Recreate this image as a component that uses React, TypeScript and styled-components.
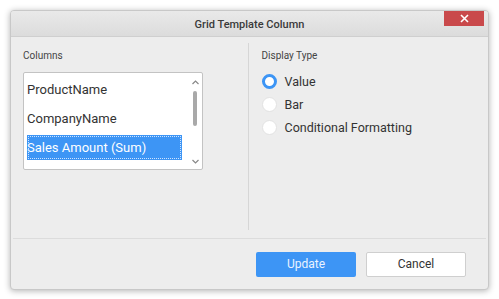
import { styled, createGlobalStyle } from 'styled-components';

const GlobalStyle = createGlobalStyle`
  html, body {
    margin: 0;
    padding: 0;
    background: #ffffff;
    font-family: Roboto, "Liberation Sans", sans-serif;
  }
`;

const columns = ['ProductName', 'CompanyName', 'Sales Amount (Sum)'];
const displayTypes = ['Value', 'Bar', 'Conditional Formatting'];

const App = () => {
  return (
    <>
      <GlobalStyle />
      <Page>
        <Dialog>
          <TitleBar>
            <Title>Grid Template Column</Title>
            <CloseButton aria-label="close">
              <svg width="9" height="9" viewBox="0 0 9 9">
                <path d="M1 1 L8 8 M8 1 L1 8" stroke="#fff" strokeWidth="1.6" />
              </svg>
            </CloseButton>
          </TitleBar>
          <Body>
            <Pane $inset={10}>
              <SectionLabel>Columns</SectionLabel>
              <ListBox>
                <ListItems>
                  {columns.map((c, i) => (
                    <ListItem key={c} $selected={i === 2}>
                      {c}
                    </ListItem>
                  ))}
                </ListItems>
                <ScrollTrack>
                  <Arrow>
                    <svg width="7" height="5" viewBox="0 0 7 5">
                      <path d="M0.5 4 L3.5 1 L6.5 4" stroke="#888" strokeWidth="1.2" fill="none" />
                    </svg>
                  </Arrow>
                  <Thumb />
                  <Spacer />
                  <Arrow>
                    <svg width="7" height="5" viewBox="0 0 7 5">
                      <path d="M0.5 1 L3.5 4 L6.5 1" stroke="#888" strokeWidth="1.2" fill="none" />
                    </svg>
                  </Arrow>
                </ScrollTrack>
              </ListBox>
            </Pane>
            <Divider />
            <Pane $inset={13}>
              <SectionLabel>Display Type</SectionLabel>
              <RadioList>
                {displayTypes.map((t, i) => (
                  <RadioRow key={t}>
                    <Radio $checked={i === 0} />
                    <RadioText>{t}</RadioText>
                  </RadioRow>
                ))}
              </RadioList>
            </Pane>
          </Body>
          <Footer>
            <PrimaryButton>Update</PrimaryButton>
            <SecondaryButton>Cancel</SecondaryButton>
          </Footer>
        </Dialog>
      </Page>
    </>
  );
};

export default App;

const Page = styled.div`
  width: 499px;
  height: 299px;
  padding: 10px;
  box-sizing: border-box;
`;

const Dialog = styled.div`
  width: 479px;
  height: 280px;
  box-sizing: border-box;
  background: #ededed;
  border: 1px solid #c8c8c8;
  border-radius: 4px;
  box-shadow: 0 1px 6px rgba(0, 0, 0, 0.3);
  display: flex;
  flex-direction: column;
  overflow: hidden;
`;

const TitleBar = styled.div`
  height: 25px;
  flex-shrink: 0;
  position: relative;
  display: flex;
  align-items: center;
  justify-content: center;
  background: linear-gradient(#e9e9e9, #dcdcdc);
  border-bottom: 1px solid #cfcfcf;
`;

const Title = styled.div`
  font-size: 11px;
  font-weight: 500;
  color: #3a3a3a;
  padding-top: 1px;
`;

const CloseButton = styled.div`
  position: absolute;
  top: -1px;
  right: 4px;
  width: 40px;
  height: 16px;
  background: #c9494b;
  display: flex;
  align-items: center;
  justify-content: center;
`;

const Body = styled.div`
  flex: 1;
  display: flex;
  padding-top: 6px;
  border-bottom: 1px solid #dcdcdc;
  margin: 0 2px;
`;

const Pane = styled.div<{ $inset: number }>`
  flex: 1;
  padding: 6px 11px 0 ${(p) => p.$inset}px;
`;

const Divider = styled.div`
  width: 1px;
  background: #d6d6d6;
  margin-bottom: 8px;
`;

const SectionLabel = styled.div`
  font-size: 10px;
  color: #444;
  height: 13px;
  line-height: 13px;
`;

const ListBox = styled.div`
  margin-top: 10px;
  width: 180px;
  height: 98px;
  box-sizing: border-box;
  background: #fff;
  border: 1px solid #c3c3c3;
  border-radius: 2px;
  display: flex;
  overflow: hidden;
`;

const ListItems = styled.div`
  flex: 1;
  padding: 4px 0 0 3px;
  display: flex;
  flex-direction: column;
  gap: 4px;
`;

const ListItem = styled.div<{ $selected?: boolean }>`
  height: 25px;
  line-height: 25px;
  font-size: 13px;
  width: 155px;
  box-sizing: border-box;
  flex-shrink: 0;
  color: ${(p) => (p.$selected ? '#ffffff' : '#333')};
  background: ${(p) => (p.$selected ? '#3d95f5' : 'transparent')};
  outline: ${(p) => (p.$selected ? '1px dotted #cfe4ff' : 'none')};
  outline-offset: -2px;
  white-space: nowrap;
`;

const ScrollTrack = styled.div`
  width: 14px;
  display: flex;
  flex-direction: column;
  align-items: center;
  padding: 6px 0 4px;
  box-sizing: border-box;
`;

const Arrow = styled.div`
  height: 7px;
  display: flex;
  align-items: center;
`;

const Thumb = styled.div`
  width: 4px;
  height: 35px;
  margin-top: 5px;
  border-radius: 2px;
  background: #a9a9a9;
`;

const Spacer = styled.div`
  flex: 1;
`;

const RadioList = styled.div`
  margin-top: 11px;
  display: flex;
  flex-direction: column;
  gap: 7px;
`;

const RadioRow = styled.div`
  display: flex;
  align-items: center;
  height: 16px;
`;

const Radio = styled.div<{ $checked?: boolean }>`
  width: 15px;
  height: 15px;
  box-sizing: border-box;
  border-radius: 50%;
  background: #fff;
  border: ${(p) => (p.$checked ? '3px solid #3d95f5' : '1px solid #e2e2e2')};
`;

const RadioText = styled.span`
  margin-left: 8px;
  font-size: 12.5px;
  color: #333;
`;

const Footer = styled.div`
  height: 50px;
  flex-shrink: 0;
  display: flex;
  justify-content: flex-end;
  align-items: center;
  gap: 10px;
  padding-right: 22px;
`;

const PrimaryButton = styled.div`
  width: 100px;
  height: 25px;
  box-sizing: border-box;
  border-radius: 2px;
  background: #3d95f5;
  color: #eaf3ff;
  font-size: 12px;
  display: flex;
  align-items: center;
  justify-content: center;
`;

const SecondaryButton = styled(PrimaryButton)`
  background: #fff;
  border: 1px solid #cfcfcf;
  color: #333;
`;
